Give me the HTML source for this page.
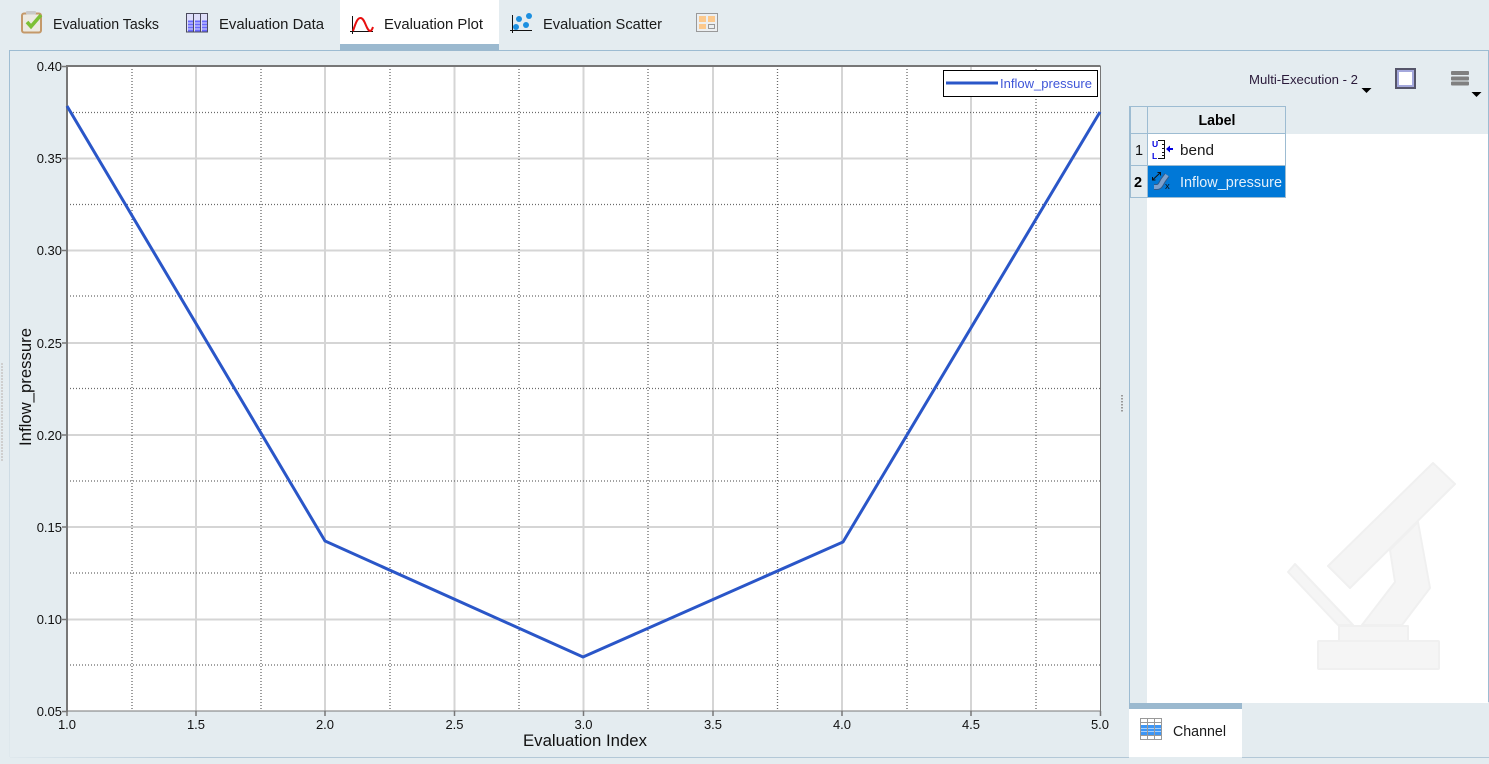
<!DOCTYPE html>
<html><head><meta charset="utf-8">
<style>
html,body{margin:0;padding:0;background:#e4ecf0;width:1489px;height:764px;overflow:hidden}
svg{display:block;font-family:"Liberation Sans",sans-serif}
</style></head><body>
<svg width="1489" height="764" viewBox="0 0 1489 764" xmlns="http://www.w3.org/2000/svg">
<defs>
<linearGradient id="lb" gradientUnits="userSpaceOnUse" x1="0" y1="50" x2="0" y2="757"><stop offset="0" stop-color="#9dbcd2"/><stop offset=".35" stop-color="#c2d3df"/><stop offset="1" stop-color="#dfe8ed"/></linearGradient>
<linearGradient id="bb" gradientUnits="userSpaceOnUse" x1="10" y1="0" x2="200" y2="0"><stop offset="0" stop-color="#dfe8ed"/><stop offset="1" stop-color="#b3c8d7"/></linearGradient>
</defs>
<rect width="1489" height="764" fill="#e4ecf0"/>

<!-- panel border -->
<path d="M9.5 50.5H1488.5V702" fill="none" stroke="#9dbcd2"/>
<rect x="9" y="50" width="1" height="707" fill="url(#lb)"/>
<rect x="10" y="757" width="1119" height="1" fill="url(#bb)"/>
<path d="M1242 757.5H1489" stroke="#b3c8d7"/>
<path d="M1129.500 106V703" stroke="#9dbcd2"/>

<!-- active tab -->
<rect x="340" y="0" width="159" height="44" fill="#fff"/>
<rect x="340" y="44" width="159" height="7" fill="#9bb9cf"/>

<!-- tasks icon -->
<rect x="22" y="13.500" width="19" height="19" rx="2" fill="#eceae2" stroke="#c4996a" stroke-width="2"/>
<rect x="26" y="11" width="10" height="3.500" rx="1" fill="#c9c9c9"/>
<path d="M27 22l4 4.500 10-11.500" fill="none" stroke="#7cc034" stroke-width="3.600"/>
<!-- data icon -->
<rect x="186.500" y="13.500" width="21" height="18.500" fill="#dedefa" stroke="#4a4a5c"/>
<path d="M193.500 14v18M200.500 14v18" stroke="#4a4a5c"/>
<path d="M188 21.500h5M188 24.500h5M188 27.500h5M188 30.500h5M195 21.500h5M195 24.500h5M195 27.500h5M195 30.500h5M202 21.500h5M202 24.500h5M202 27.500h5M202 30.500h5" stroke="#6a6aff" stroke-width="2"/>
<!-- plot icon -->
<path d="M352.500 16v18M350 31.500h23" stroke="#111" fill="none"/>
<path d="M353 31C356 22 357.500 18 360.500 18C365 18 366 30 370 31C371 31 372 30 373 27" fill="none" stroke="#e81010" stroke-width="2"/>
<!-- scatter icon -->
<path d="M512.500 15v18M510 30.500h22" stroke="#111" fill="none"/>
<circle cx="516" cy="27" r="3" fill="#1c8fe0"/><circle cx="519" cy="19" r="3" fill="#1c8fe0"/><circle cx="526" cy="25" r="3" fill="#1c8fe0"/><circle cx="529" cy="16" r="3" fill="#1c8fe0"/>
<!-- layout icon -->
<rect x="696.500" y="13.500" width="21" height="18" fill="#eceff1" stroke="#999"/>
<rect x="699" y="16" width="7" height="6" fill="#fcc98d"/><rect x="708" y="16" width="7" height="6" fill="#fcc98d"/><rect x="699" y="24" width="7" height="5" fill="#fcc98d"/><rect x="708.500" y="24.500" width="6" height="4" fill="none" stroke="#999"/>

<g font-size="14.500" fill="#1a1a1a">
<text x="53" y="29" textLength="106" lengthAdjust="spacingAndGlyphs">Evaluation Tasks</text>
<text x="219" y="29" textLength="105" lengthAdjust="spacingAndGlyphs">Evaluation Data</text>
<text x="384" y="29" textLength="99" lengthAdjust="spacingAndGlyphs">Evaluation Plot</text>
<text x="543" y="29" textLength="119" lengthAdjust="spacingAndGlyphs">Evaluation Scatter</text>
</g>

<!-- plot -->
<rect x="67" y="66" width="1033" height="645" fill="#fff"/>
<g stroke="#d5d5d5" stroke-width="2" fill="none">
<path d="M196 66V711M325 66V711M454.500 66V711M583.500 66V711M713 66V711M842 66V711M971 66V711"/>
<path d="M67 158.500H1100M67 250.500H1100M67 343H1100M67 435H1100M67 527H1100M67 619.500H1100"/>
</g>
<g stroke="#6a6a6a" stroke-width="1.300" stroke-dasharray="1 2" fill="none">
<path d="M132 66V711M261 66V711M390 66V711M519 66V711M648 66V711M777.500 66V711M907 66V711M1036 66V711"/>
<path d="M67 112.500H1100M67 204.500H1100M67 296H1100M67 388.500H1100M67 481H1100M67 573H1100M67 665H1100"/>
</g>
<path d="M67 66H1100.500V711H67Z" fill="none" stroke="#777" stroke-width="1"/>
<path d="M67 65V712" stroke="#777" stroke-width="2"/>
<path d="M66 66H1100" stroke="#777" stroke-width="2"/>
<path d="M62 66.500h5M62 158.500h5M62 250.500h5M62 343h5M62 435h5M62 527h5M62 619.500h5M62 711.500h5" stroke="#777" stroke-width="1.500"/>
<path d="M67 711v5M196 711v5M325 711v5M454.500 711v5M583.500 711v5M713 711v5M842 711v5M971 711v5M1100.500 711v5" stroke="#777" stroke-width="1.500"/>

<polyline points="67,106 325,541 583,657 843,542 1100,112" fill="none" stroke="#2a56c8" stroke-width="3"/>

<!-- legend -->
<rect x="943.500" y="70.500" width="154" height="26" fill="#fff" stroke="#000"/>
<path d="M946 83H998" stroke="#2a56c8" stroke-width="3"/>
<text x="1000" y="88" font-size="13" fill="#3f56d8" textLength="92" lengthAdjust="spacingAndGlyphs">Inflow_pressure</text>

<!-- axis labels -->
<g font-size="13" fill="#111" text-anchor="end">
<text x="62" y="71">0.40</text><text x="62" y="163">0.35</text><text x="62" y="255">0.30</text><text x="62" y="348">0.25</text><text x="62" y="440">0.20</text><text x="62" y="532">0.15</text><text x="62" y="624">0.10</text><text x="62" y="716">0.05</text>
</g>
<g font-size="13" fill="#111" text-anchor="middle">
<text x="67" y="729">1.0</text><text x="196" y="729">1.5</text><text x="325" y="729">2.0</text><text x="454.500" y="729">2.5</text><text x="583.500" y="729">3.0</text><text x="713" y="729">3.5</text><text x="842" y="729">4.0</text><text x="971" y="729">4.5</text><text x="1100" y="729">5.0</text>
</g>
<text x="523" y="746" font-size="16.500" fill="#111" textLength="124" lengthAdjust="spacingAndGlyphs">Evaluation Index</text>
<text transform="translate(31,446) rotate(-90)" font-size="16.500" fill="#111" textLength="118" lengthAdjust="spacingAndGlyphs">Inflow_pressure</text>

<!-- splitters -->
<path d="M1122 395V413" stroke="#9a9a9a" stroke-width="2" stroke-dasharray="1.500 1.500"/>
<path d="M2 363V462" stroke="#cfcfcf" stroke-width="2" stroke-dasharray="2 1"/>

<!-- right toolbar -->
<text x="1249" y="84" font-size="13" fill="#2a1a3a" textLength="109" lengthAdjust="spacingAndGlyphs">Multi-Execution - 2</text>
<path d="M1361.500 88h10l-5 5z" fill="#000"/>
<rect x="1396" y="69" width="19" height="19" fill="#fff" stroke="#55556a" stroke-width="2"/>
<rect x="1398" y="71" width="15" height="15" fill="#fff" stroke="#a4a8dc" stroke-width="2"/>
<rect x="1451" y="71" width="18" height="4" rx="1" fill="#808080"/><rect x="1451" y="76.500" width="18" height="4" rx="1" fill="#808080"/><rect x="1451" y="81.500" width="18" height="4" rx="1" fill="#808080"/>
<path d="M1471.500 92h10l-5 5z" fill="#000"/>

<!-- table -->
<rect x="1147" y="134" width="341" height="569" fill="#fff"/>
<rect x="1147" y="134" width="138" height="32" fill="#fff"/>
<rect x="1147" y="166" width="138" height="31" fill="#0078d7"/>
<path d="M1130.500 106.500H1285.500V197.500H1130.500ZM1147.500 106.500V197.500M1130.500 133.500H1285.500M1130.500 165.500H1285.500" fill="none" stroke="#9dbcd2"/>
<text x="1217" y="125" font-size="14.500" font-weight="bold" fill="#000" text-anchor="middle" textLength="37" lengthAdjust="spacingAndGlyphs">Label</text>
<text x="1135" y="155" font-size="14.500" fill="#111">1</text>
<text x="1134" y="187" font-size="14.500" font-weight="bold" fill="#000">2</text>

<!-- bend icon -->
<text x="1152" y="147" font-size="8.500" font-weight="bold" fill="#0000e0">U</text>
<text x="1152" y="159" font-size="8.500" font-weight="bold" fill="#0000e0">L</text>
<path d="M1158 140.500h7M1164.500 140.500v18M1158 158.500h7M1162 144.500h2M1162 148.500h2M1162 152.500h2M1162 155.500h2" fill="none" stroke="#111"/>
<path d="M1166 149l4-3.500v2.500h3v2h-3v2.500z" fill="#0000e0"/>
<text x="1180" y="155" font-size="14.500" fill="#1a1a1a" textLength="34" lengthAdjust="spacingAndGlyphs">bend</text>

<!-- pressure icon -->
<path d="M1154 187h3c3 0 4-3 6-6.500l4-5.500" fill="none" stroke="#2f5a8c" stroke-width="6"/>
<path d="M1154 187h3c3 0 4-3 6-6.500l4-5.500" fill="none" stroke="#7da0cc" stroke-width="4"/>
<path d="M1152.500 180l8-7.500M1152.500 177v3h3M1157.500 172.500h3v3" fill="none" stroke="#111"/>
<text x="1165" y="189" font-size="9.500" fill="#111">x</text>
<text x="1180" y="187" font-size="14.500" fill="#e4f0fa" textLength="102" lengthAdjust="spacingAndGlyphs">Inflow_pressure</text>

<!-- watermark -->
<g fill="#f5f5f5" stroke="#f0f0f0" stroke-width="2" stroke-linejoin="round">
<path d="M1295 564L1288 572L1338 625H1353Z"/>
<path d="M1418 522L1430 588L1402 625H1362L1395 582L1390 550Z"/>
<path d="M1433 463L1455 484L1350 588L1328 566Z"/>
<rect x="1339" y="626" width="69" height="15"/>
<rect x="1318" y="641" width="121" height="28" rx="1"/>
</g>

<!-- channel tab -->
<rect x="1129" y="703" width="113" height="6" fill="#9bb9cf"/>
<rect x="1129" y="709" width="113" height="48" fill="#fff"/>
<rect x="1140.500" y="718.500" width="21" height="21" fill="#fff" stroke="#999"/>
<path d="M1141 722.500h20M1141 735.500h20" stroke="#999"/>
<rect x="1141" y="725" width="20" height="10" fill="#3d96f5"/>
<path d="M1141 728.500h20M1141 731.500h20" stroke="#a8d0fa"/>
<path d="M1147.500 719v20M1154.500 719v20" stroke="#999"/>
<text x="1173" y="736" font-size="14.500" fill="#1a1a1a" textLength="53" lengthAdjust="spacingAndGlyphs">Channel</text>
</svg>
</body></html>
